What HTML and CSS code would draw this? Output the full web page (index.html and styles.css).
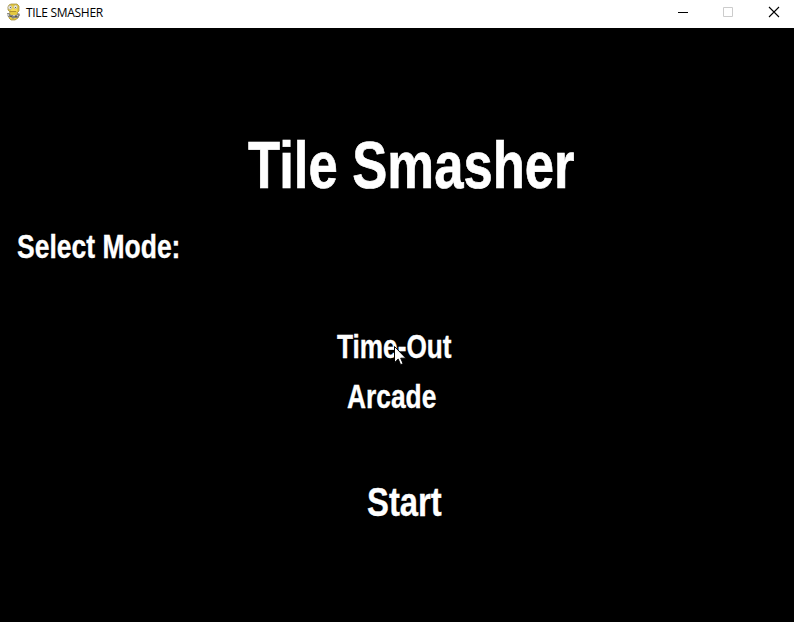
FILE: index.html
```html
<!DOCTYPE html>
<html lang="en">
<head>
<meta charset="utf-8">
<title>TILE SMASHER</title>
<link rel="stylesheet" href="styles.css">
</head>
<body>
<header class="titlebar">
  <svg class="app-icon" width="16" height="18" viewBox="0 0 16 18">
    <path d="M3 2l2-1h6l2 2v5l-2 2 2 2-1 3-3 2H5l-2-2v-4l1-2-2-2V4z" fill="#e3c93f" stroke="#9b8534" stroke-width=".7"/>
    <path d="M5 3h6v5H5z" fill="#f5dc53"/>
    <circle cx="4" cy="4.500" r="2" fill="#e2e2dc" stroke="#a8a18a" stroke-width=".5"/>
    <circle cx="9.500" cy="4" r="1.900" fill="#e9e7dc" stroke="#b3a766" stroke-width=".5"/>
    <path d="M4 4h1v1H4zM9 4h1v1H9z" fill="#666"/>
    <path d="M4 8.500h6" stroke="#b2942e"/>
    <path d="M1 10h2l2 2h5l3-2 1 2-2 3H8l-1 1-2-2H2z" fill="#85857f"/>
    <path d="M1 11h2v2H1zM7 12h2v1H7zM11 12h1v1h-1z" fill="#c9c9c4"/>
    <path d="M4 13.500h2M9 13.500h2" stroke="#5c5c56"/>
  </svg>
  <span class="caption">TILE SMASHER</span>
  <div class="controls">
    <svg width="46" height="28" viewBox="0 0 46 28"><path d="M14 12.500h10" stroke="#000"/></svg>
    <svg width="46" height="28" viewBox="0 0 46 28"><path d="M13.500 7.500h9v9h-9z" fill="none" stroke="#ccc"/></svg>
    <svg width="46" height="28" viewBox="0 0 46 28"><path d="M13 7l10 10M23 7L13 17" stroke="#000" stroke-width="1.100"/></svg>
  </div>
</header>
<main class="screen">
  <h1 class="label title">Tile Smasher</h1>
  <h2 class="label prompt">Select Mode:</h2>
  <nav class="modes">
    <div class="label timeout">Time-Out</div>
    <div class="label arcade">Arcade</div>
  </nav>
  <div class="label start">Start</div>
  <svg class="cursor" width="13" height="20" viewBox="0 0 13 20"><path d="M.5.5v16.200l3.700-3.600 2.400 5.600 2.500-1-2.400-5.500h5.200z" fill="#fff" stroke="#000"/></svg>
</main>
</body>
</html>
```
FILE: styles.css
```css
body {
  margin: 0;
  height: 622px;
  overflow: hidden;
  background: #000;
}

.titlebar {
  display: flex;
  box-sizing: border-box;
  height: 28px;
  padding-left: 6px;
  background: #fff;
}

.app-icon {
  margin-top: 3px;
}

.caption {
  width: 90px;
  margin-left: 4px;
  font: 12px/25px "Open Sans", "Noto Sans", sans-serif;
  letter-spacing: -0.3px;
  white-space: nowrap;
  color: #000;
}

.controls {
  display: flex;
  margin-left: auto;
  margin-right: -8px;
}

.screen {
  position: relative;
  display: flex;
  flex-direction: column;
  align-items: flex-start;
  height: 594px;
  padding-top: 102px;
  box-sizing: border-box;
  background: #000;
}

/* The game font is a condensed bold sans. */
.label {
  margin: 0;
  font: bold 33px/40px "Liberation Sans", Arial, sans-serif;
  color: #fff;
  white-space: nowrap;
  transform-origin: 0 0;
  -webkit-text-stroke: 0.35px #fff;
}

.title {
  margin-left: 247.500px;
  font-size: 66px;
  line-height: 71px;
  transform: scaleX(0.797);
  -webkit-text-stroke-width: 0.7px;
}

.prompt {
  margin: 26px 0 0 17px;
  transform: scaleX(0.803);
}

.modes {
  display: flex;
  flex-direction: column;
  gap: 10px;
  margin-top: 60px;
}

.timeout {
  margin-left: 337px;
  transform: scaleX(0.794);
}

.arcade {
  margin-left: 347px;
  transform: scaleX(0.798);
}

.start {
  margin: 60px 0 0 367px;
  font-size: 41px;
  line-height: 50px;
  transform: scaleX(0.8);
}

.cursor {
  position: absolute;
  left: 394px;
  top: 318px;
}
```
